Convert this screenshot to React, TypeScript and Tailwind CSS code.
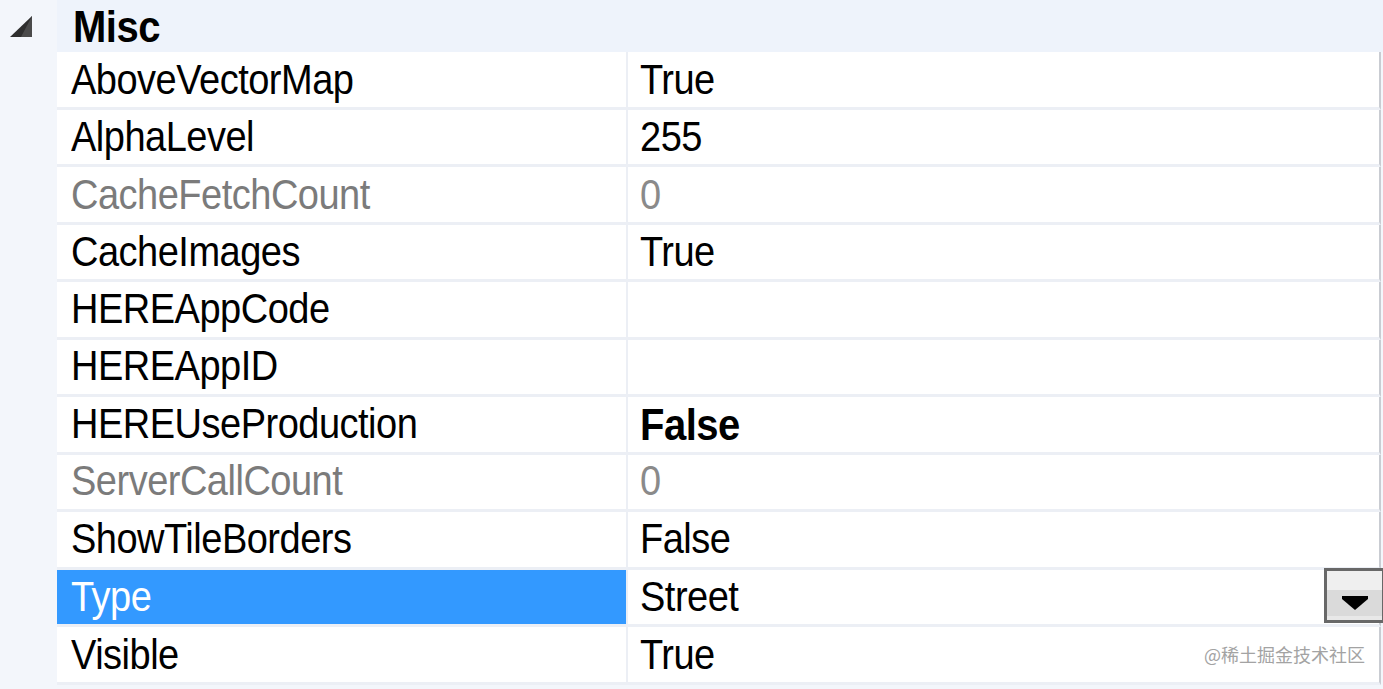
import React from "react";

type Prop = { name: string; value: string; readOnly?: boolean; bold?: boolean; selected?: boolean; dropdown?: boolean };

const props: Prop[] = [
  { name: "AboveVectorMap", value: "True" },
  { name: "AlphaLevel", value: "255" },
  { name: "CacheFetchCount", value: "0", readOnly: true },
  { name: "CacheImages", value: "True" },
  { name: "HEREAppCode", value: "" },
  { name: "HEREAppID", value: "" },
  { name: "HEREUseProduction", value: "False", bold: true },
  { name: "ServerCallCount", value: "0", readOnly: true },
  { name: "ShowTileBorders", value: "False" },
  { name: "Type", value: "Street", selected: true, dropdown: true },
  { name: "Visible", value: "True" },
];

function DropButton() {
  return (
    <div className="absolute right-[-6px] top-[-2px] flex h-[55px] w-[61px] flex-col border-[3px] border-[#686868] bg-[#f2f2f2]">
      <div className="h-[19px] bg-[#efefef]" />
      <div className="flex flex-1 items-center justify-center bg-[#dadada]">
        <svg width="28" height="16" viewBox="0 0 28 16">
          <polygon points="1,1 27,1 27,4 14,15 1,4" fill="#000" />
        </svg>
      </div>
      <div className="h-[4px] bg-[#e8e8e8]" />
    </div>
  );
}

export default function App() {
  return (
    <div
      className="flex h-[689px] w-[1383px] flex-col overflow-hidden bg-[#f3f6fb] text-[38px] tracking-[-0.5px] text-black"
      style={{ fontFamily: '"Liberation Sans", Arial, sans-serif' }}
    >
      <div className="flex h-[52px] shrink-0 items-center">
        <div className="flex w-[57px] pl-[10px]">
          <svg width="23" height="21" viewBox="0 0 23 21">
            <polygon points="22,0 22,21 0,21" fill="#2e2e2e" />
            <polygon points="22,0 22,21 11,21" fill="#4a4a4a" />
          </svg>
        </div>
        <div className="flex h-full flex-1 items-center bg-[#eef3fb] pl-[16px] text-[40px] font-bold">
          <span className="inline-block scale-y-[1.12]">Misc</span>
        </div>
      </div>
      {props.map((p) => (
        <div key={p.name} className="ml-[57px] mr-[2px] flex h-[57.5px] shrink-0 border-b-[3px] border-r-[2px] border-[#eceff5] border-r-[#c9ccd2] bg-white">
          <div
            className={`flex w-[569px] items-center pl-[14px] ${p.selected ? "bg-[#3399ff] text-white" : ""} ${
              p.readOnly ? "text-[#7b7b7b]" : ""
            }`}
          >
            <span className="inline-block scale-y-[1.12]">{p.name}</span>
          </div>
          <div className="w-[2px] bg-[#eceff5]" />
          <div
            className={`relative flex flex-1 items-center pl-[12px] ${p.readOnly ? "text-[#8a8a8a]" : ""} ${
              p.bold ? "text-[40px] font-bold" : ""
            }`}
          >
            <span className="inline-block scale-y-[1.12]">{p.value}</span>
            {p.dropdown && <DropButton />}
            {p.name === "Visible" && (
              <span
                className="absolute right-[14px] text-[18px] tracking-normal text-[#a3a3a3]"
                style={{ fontFamily: '"Noto Sans CJK SC", sans-serif' }}
              >
                @稀土掘金技术社区
              </span>
            )}
          </div>
        </div>
      ))}
    </div>
  );
}
